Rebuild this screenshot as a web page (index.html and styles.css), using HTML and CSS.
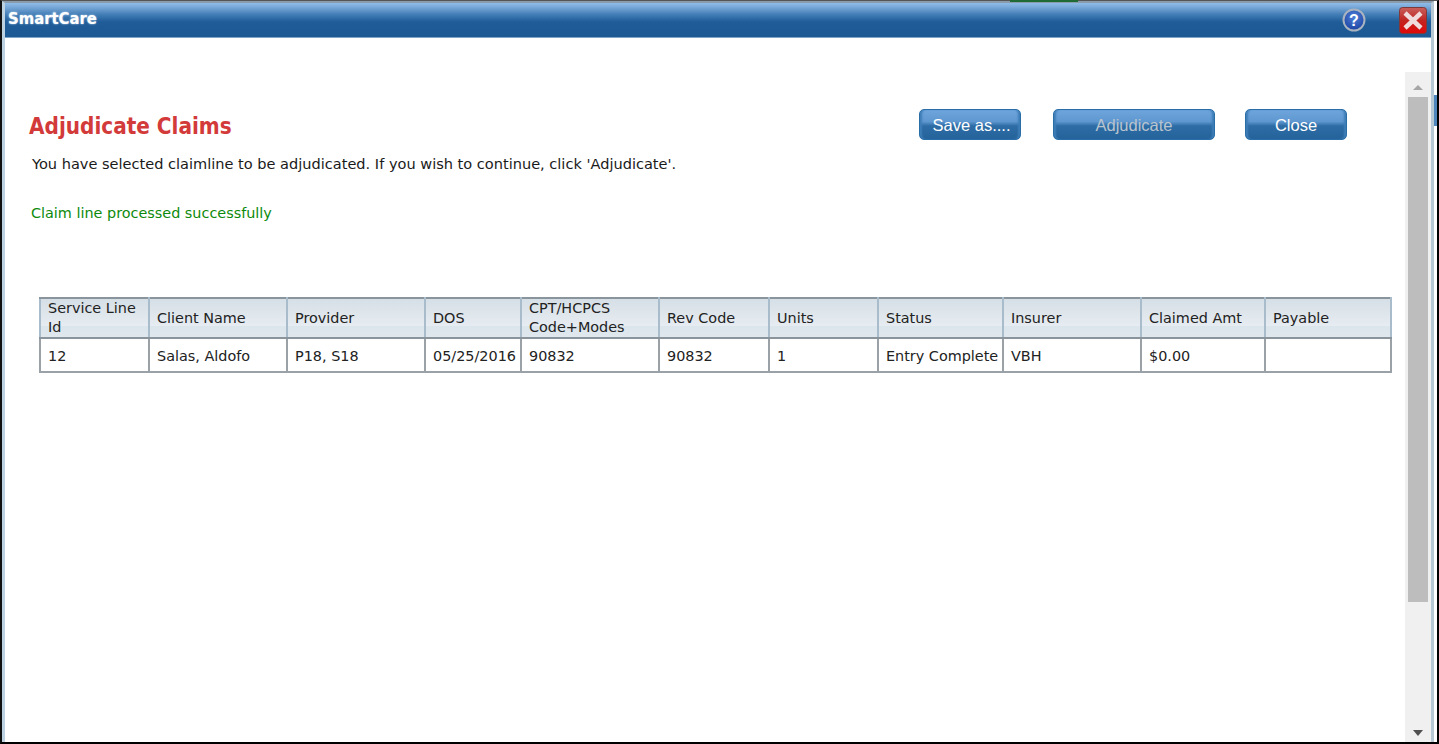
FILE: index.html
```html
<!DOCTYPE html>
<html lang="en">
<head>
<meta charset="utf-8">
<title>SmartCare</title>
<link rel="stylesheet" href="styles.css">
</head>
<body>
<div class="screen">
  <span class="peek peek-green"></span>
  <span class="peek peek-blue"></span>
  <div class="window">
    <header class="titlebar">
      <span class="brand">SmartCare</span>
      <div class="title-actions">
        <svg class="help" width="24" height="24" viewBox="0 0 24 24" aria-hidden="true">
          <defs>
            <radialGradient id="hg" cx="50%" cy="35%" r="70%"><stop offset="0" stop-color="#4f7fd8"/><stop offset="1" stop-color="#173f9e"/></radialGradient>
          </defs>
          <circle cx="12" cy="12" r="10.5" fill="url(#hg)" stroke="#a9b4c0" stroke-width="2"/>
          <text x="12" y="17.5" text-anchor="middle" class="help-q">?</text>
        </svg>
        <svg class="close-x" width="28" height="27" viewBox="0 0 28 27" aria-hidden="true">
          <defs>
            <linearGradient id="cg" x1="0" y1="0" x2="0" y2="1"><stop offset="0" stop-color="#c8605c"/><stop offset=".5" stop-color="#c22420"/><stop offset="1" stop-color="#e00808"/></linearGradient>
          </defs>
          <rect x=".5" y=".5" width="27" height="26" rx="3" fill="url(#cg)" stroke="#7d3a3a"/>
          <path d="M6 6 L22 21 M22 6 L6 21" stroke="#f0dcdc" stroke-width="4.5"/>
        </svg>
      </div>
    </header>
    <div class="body">
      <main class="content">
        <div class="head-row">
          <h1 class="title">Adjudicate Claims</h1>
          <div class="buttons">
            <button class="btn btn-save">Save as....</button>
            <button class="btn btn-adj">Adjudicate</button>
            <button class="btn btn-close">Close</button>
          </div>
        </div>
        <p class="intro">You have selected claimline to be adjudicated. If you wish to continue, click 'Adjudicate'.</p>
        <p class="success">Claim line processed successfully</p>
        <table class="grid">
          <colgroup>
            <col class="c1"><col class="c2"><col class="c3"><col class="c4"><col class="c5"><col class="c6"><col class="c7"><col class="c8"><col class="c9"><col class="c10"><col class="c11">
          </colgroup>
          <thead>
            <tr>
              <th>Service Line Id</th><th>Client Name</th><th>Provider</th><th>DOS</th><th>CPT/HCPCS Code+Modes</th><th>Rev Code</th><th>Units</th><th>Status</th><th>Insurer</th><th>Claimed Amt</th><th>Payable</th>
            </tr>
          </thead>
          <tbody>
            <tr>
              <td>12</td><td>Salas, Aldofo</td><td>P18, S18</td><td>05/25/2016</td><td>90832</td><td>90832</td><td>1</td><td>Entry Complete</td><td>VBH</td><td>$0.00</td><td></td>
            </tr>
          </tbody>
        </table>
      </main>
      <div class="scrollbar">
        <span class="arrow-up"></span>
        <div class="thumb"></div>
        <span class="arrow-down"></span>
      </div>
    </div>
  </div>
</div>
</body>
</html>
```
FILE: styles.css
```css
* { box-sizing: border-box; }
html, body { margin: 0; height: 100%; overflow: hidden; }
body { background: #000; font-family: "DejaVu Sans", Tahoma, sans-serif; }
.screen {
  position: relative;
  width: 1439px; height: 744px;
  border-left: 2px solid #111;
  border-right: 2px solid #000;
  border-bottom: 2px solid #000;
  border-top: 1px solid #555;
  background: #fff;
  padding-right: 3px;
}
.peek { position: absolute; display: block; }
.peek-green { left: 1008px; top: -1px; width: 68px; height: 2px; background: #1f6a35; }
.peek-blue { left: 1432px; top: 94px; width: 3px; height: 31px; background: #4f86bb; }
.window {
  height: 100%;
  display: flex;
  flex-direction: column;
  background: #fff;
  border-left: 3px solid #bcd2e0;
  border-right: 3px solid #b5c8d4;
  border-top: 2px solid #8a9cab;
}
.titlebar {
  height: 35px;
  flex: none;
  display: flex;
  align-items: center;
  justify-content: space-between;
  background: linear-gradient(#8fbce8 0, #7aa9d9 4px, #3f7bb4 12px, #1f5c98 19px, #1d5a94 100%);
  border-bottom: 1px solid #7ea6c8;
  padding: 0 3px 0 3px;
}
.brand {
  font: bold 16.5px "DejaVu Sans Condensed", "DejaVu Sans", sans-serif;
  color: #fff;
  margin-top: -3px;
  text-shadow: 0 0 2px #cfe2f5;
}
.title-actions { display: flex; align-items: center; gap: 33px; margin-right: 1px; }
.help-q { font: bold 16px "Liberation Sans", sans-serif; fill: #fff; }
.body { flex: 1; display: flex; min-height: 0; }
.content { flex: 1; min-width: 0; padding: 71px 0 0 34px; }
.head-row { display: flex; align-items: center; justify-content: space-between; height: 32px; }
.title {
  margin: 2px 0 0 -10px;
  font: bold 22.3px "DejaVu Sans Condensed", "DejaVu Sans", sans-serif;
  color: #d33a3a;
}
.buttons { display: flex; margin-right: 58px; margin-top: -2px; }
.btn {
  height: 31px;
  border: 1px solid #2a6ea8;
  border-radius: 5px;
  background: linear-gradient(#6ea5dc 0, #5f97d0 40%, #2d6ca5 55%, #24639a 100%);
  box-shadow: inset 3px 0 2px -1px #3f7eb8, inset -3px 0 2px -1px #3f7eb8;
  color: #fff;
  font: 16.5px "Liberation Sans", Arial, sans-serif;
  padding: 2px 0 0;
}
.btn-save { width: 102px; margin-right: 32px; padding-left: 3px; }
.btn-adj { width: 162px; margin-right: 30px; color: #b9c4cf; }
.btn-close { width: 102px; }
.intro {
  margin: 13px 0 0 -7px;
  font-size: 14.55px;
  line-height: 20px;
  color: #1a1a1a;
}
.success {
  margin: 29px 0 0 -8px;
  font-size: 14.4px;
  line-height: 20px;
  color: #0c8a0c;
}
.grid {
  margin: 74px 0 0 0;
  table-layout: fixed;
  border-collapse: collapse;
  width: 1352px;
  font-size: 14.4px;
  color: #222;
}
.c1 { width: 109px; } .c2 { width: 138px; } .c3 { width: 138px; } .c4 { width: 96px; }
.c5 { width: 138px; } .c6 { width: 110px; } .c7 { width: 109px; } .c8 { width: 125px; }
.c9 { width: 138px; } .c10 { width: 124px; } .c11 { width: 126px; }
.grid th, .grid td {
  border: 2px solid #9aa2a8;
  padding: 0 0 0 7px;
  text-align: left;
  font-weight: normal;
  white-space: nowrap;
  overflow: hidden;
}
.grid th {
  height: 40px;
  line-height: 19px;
  white-space: normal;
  background: linear-gradient(#d6dfe6 0, #e6ecf1 70%, #dbe5ec 72%, #e0e8ee 100%);
  border-color: #8a949c #a9bccb #8a949c #a9bccb;
}
.grid td { height: 34px; padding-top: 1px; }
.scrollbar {
  flex: none;
  width: 26px;
  margin-top: 34px;
  background: #f0f0f0;
  display: flex;
  flex-direction: column;
  align-items: center;
  padding: 13px 0 6px;
}
.arrow-up { width: 0; height: 0; border: 5px solid transparent; border-top: 0; border-bottom: 5px solid #a6a6a6; flex: none; }
.thumb { width: 20px; height: 505px; background: #bdbdbd; margin-top: 7px; flex: none; }
.arrow-down { width: 0; height: 0; border: 5px solid transparent; border-bottom: 0; border-top: 6px solid #505050; margin-top: auto; flex: none; }
```
